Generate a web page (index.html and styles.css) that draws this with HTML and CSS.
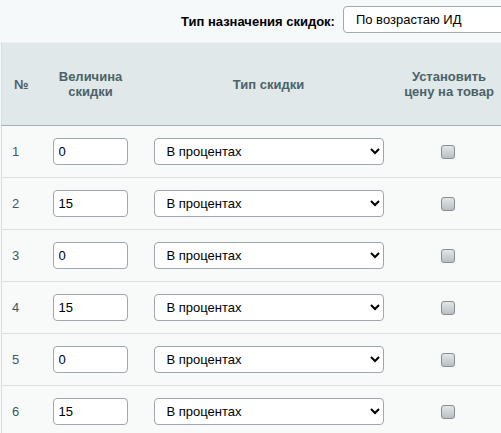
FILE: index.html
```html
<!DOCTYPE html>
<html lang="ru">
<head>
  <meta charset="UTF-8" />
  <title>Скидки</title>
  <link rel="stylesheet" href="styles.css">
</head>
<body>
  <!-- Discount assignment type -->
  <div class="top-bar">
    <label class="top-label" for="assignType">Тип назначения скидок:</label>
    <select id="assignType" class="top-select">
      <option>По возрастаю ИД</option>
    </select>
  </div>

  <table class="discounts">
    <colgroup>
      <col class="col-num">
      <col class="col-value">
      <col class="col-type">
      <col class="col-price">
    </colgroup>
    <thead>
      <tr>
        <th class="th-num">№</th>
        <th>Величина<br>скидки</th>
        <th>Тип скидки</th>
        <th>Установить<br>цену на товар</th>
      </tr>
    </thead>
    <tbody>
      <tr>
        <td class="num">1</td>
        <td class="value"><input type="text" class="value-input" value="0"></td>
        <td class="type"><select class="type-select"><option>В процентах</option></select></td>
        <td class="price"><input type="checkbox" class="check"></td>
      </tr>
      <tr>
        <td class="num">2</td>
        <td class="value"><input type="text" class="value-input" value="15"></td>
        <td class="type"><select class="type-select"><option>В процентах</option></select></td>
        <td class="price"><input type="checkbox" class="check"></td>
      </tr>
      <tr>
        <td class="num">3</td>
        <td class="value"><input type="text" class="value-input" value="0"></td>
        <td class="type"><select class="type-select"><option>В процентах</option></select></td>
        <td class="price"><input type="checkbox" class="check"></td>
      </tr>
      <tr>
        <td class="num">4</td>
        <td class="value"><input type="text" class="value-input" value="15"></td>
        <td class="type"><select class="type-select"><option>В процентах</option></select></td>
        <td class="price"><input type="checkbox" class="check"></td>
      </tr>
      <tr>
        <td class="num">5</td>
        <td class="value"><input type="text" class="value-input" value="0"></td>
        <td class="type"><select class="type-select"><option>В процентах</option></select></td>
        <td class="price"><input type="checkbox" class="check"></td>
      </tr>
      <tr>
        <td class="num">6</td>
        <td class="value"><input type="text" class="value-input" value="15"></td>
        <td class="type"><select class="type-select"><option>В процентах</option></select></td>
        <td class="price"><input type="checkbox" class="check"></td>
      </tr>
    </tbody>
  </table>
</body>
</html>
```

FILE: styles.css
```css
* {
  margin: 0;
  padding: 0;
  box-sizing: border-box;
}
body {
  font-family: 'Liberation Sans', Arial, sans-serif;
  font-size: 13px;
  background: #f5f9f9;
  color: #000;
  overflow: hidden;
  width: 501px;
}

/* Top bar */
.top-bar {
  display: flex;
  align-items: center;
  height: 42px;
  padding-left: 181px;
  gap: 8px;
  white-space: nowrap;
  overflow: hidden;
}
.top-label {
  font-weight: bold;
  font-size: 13px;
}
.top-select {
  flex: none;
  width: 200px;
  height: 27px;
  font-family: inherit;
  font-size: 13px;
  padding-left: 8px;
  border: 1px solid #a3aab0;
  border-radius: 4px;
  background: #fff;
  color: #000;
  margin-bottom: 3px;
}

/* Table */
.discounts {
  margin-left: 1px;
  width: 500px;
  table-layout: fixed;
  border-collapse: collapse;
}
.col-num { width: 39px; }
.col-value { width: 100px; }
.col-type { width: 256px; }
.col-price { width: 105px; }

.discounts th {
  background: #e0e8ea;
  color: #4b6267;
  font-weight: bold;
  font-size: 13px;
  line-height: 15px;
  height: 83px;
  text-align: center;
  vertical-align: middle;
  border-bottom: 1px solid #a5b0b3;
}
.discounts thead tr {
  border-top: 1px solid #eef2f3;
}
.discounts th.th-num {
  text-align: left;
  padding-left: 12px;
  border-left: 1px solid #d6dfe1;
}
.discounts td {
  height: 52px;
  vertical-align: middle;
  background: #f8fafa;
  border-bottom: 1px solid #d8e0e2;
}
.discounts td.num {
  padding-left: 10px;
  color: #3f5566;
  border-left: 1px solid #d6dfe1;
}
.discounts td.value {
  padding-left: 12px;
}
.discounts td.type {
  padding-left: 13px;
}
.discounts td.price {
  text-align: center;
}

.value-input {
  width: 75px;
  height: 27px;
  font-family: inherit;
  font-size: 13px;
  padding-left: 5px;
  border: 1px solid #a0a8ad;
  border-radius: 4px;
  background: #fff;
  color: #000;
  display: block;
}
.type-select {
  width: 230px;
  height: 27px;
  font-family: inherit;
  font-size: 13px;
  padding-left: 8px;
  border: 1px solid #a0a8ad;
  border-radius: 4px;
  background: #fff;
  color: #000;
  display: block;
}
.check {
  appearance: none;
  width: 14px;
  height: 14px;
  border: 1px solid #858d92;
  border-radius: 3px;
  background: linear-gradient(#e3e6e8, #b8bfc3);
  vertical-align: middle;
  margin-right: 3px;
}
```
